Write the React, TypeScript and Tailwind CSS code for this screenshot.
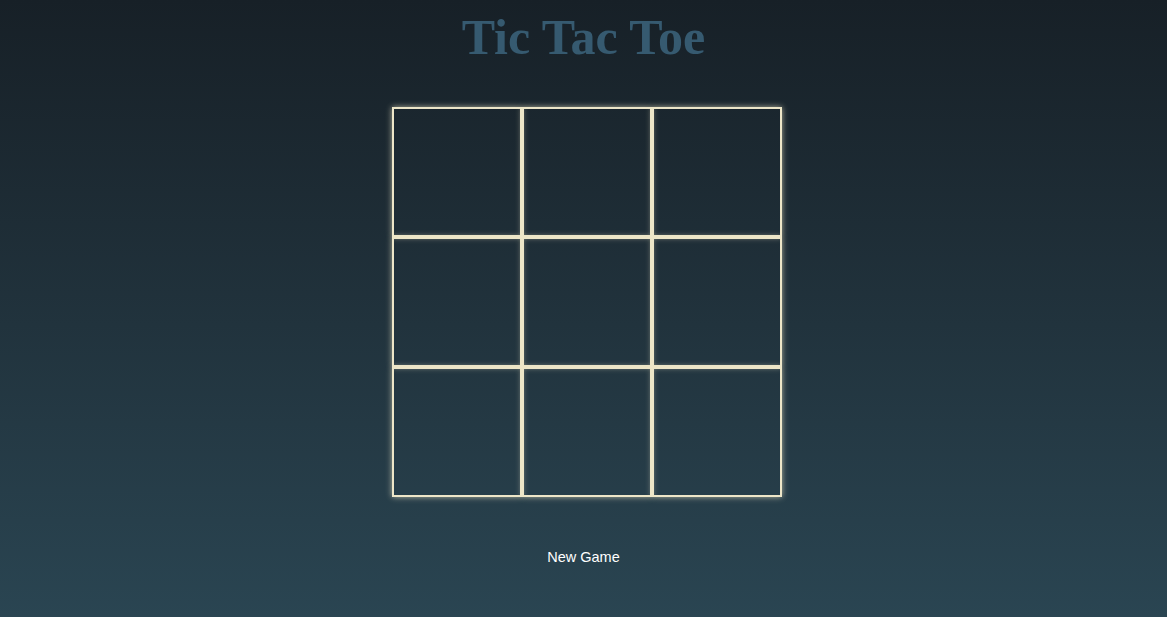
import React, { useState } from 'react';

const cells = Array.from({ length: 9 }, (_, i) => i);

export default function App() {
  const [board, setBoard] = useState<(string | null)[]>(Array(9).fill(null));
  const [turn, setTurn] = useState<'X' | 'O'>('X');

  const play = (i: number) => {
    if (board[i]) return;
    const next = board.slice();
    next[i] = turn;
    setBoard(next);
    setTurn(turn === 'X' ? 'O' : 'X');
  };

  return (
    <div className="h-[617px] w-full bg-gradient-to-b from-[#172027] to-[#2a4552] flex flex-col items-center overflow-hidden">
      <h1 className="mt-[7px] text-[50px] leading-[60px] font-bold text-[#365a70] font-['Liberation_Serif',serif]">
        Tic Tac Toe
      </h1>
      <div className="mt-[40px] ml-[6px] grid grid-cols-[repeat(3,130px)] grid-rows-[repeat(3,130px)]">
        {cells.map((i) => (
          <button
            key={i}
            onClick={() => play(i)}
            className="border-2 border-[#ede6c8] shadow-[0_0_6px_rgba(237,230,200,0.7)] text-5xl text-[#ede6c8] font-['Liberation_Sans',sans-serif]"
          >
            {board[i]}
          </button>
        ))}
      </div>
      <button
        onClick={() => setBoard(Array(9).fill(null))}
        className="mt-[50px] text-[14.5px] leading-5 text-white font-['Liberation_Sans',sans-serif]"
      >
        New Game
      </button>
    </div>
  );
}
